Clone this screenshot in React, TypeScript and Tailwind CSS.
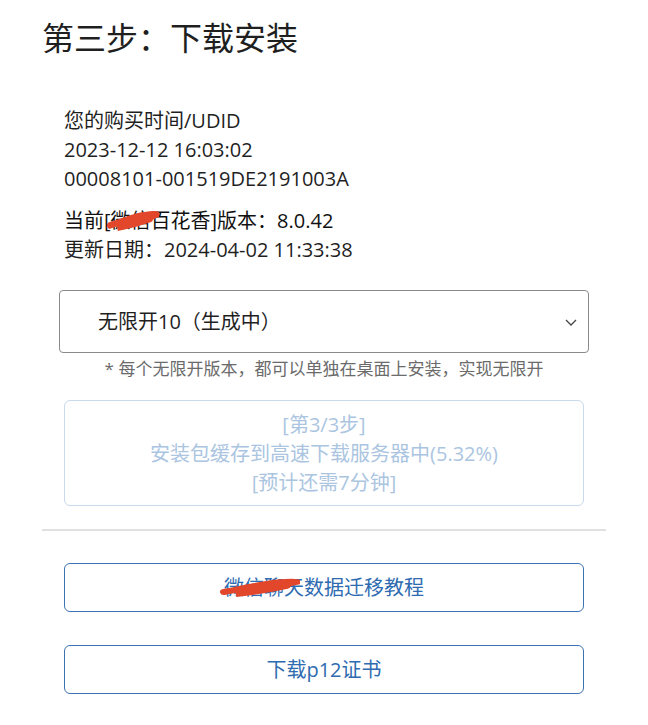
import React from "react";

function Scribble({ className }: { className: string }) {
  return (
    <svg className={className} viewBox="0 0 60 20" preserveAspectRatio="none">
      <path d="M3 15 C 15 12, 28 8, 40 6 C 48 5, 54 4, 57 5 C 45 9, 30 12, 12 17 C 25 15, 40 12, 50 9" stroke="#e2462b" strokeWidth="6" fill="none" strokeLinecap="round" />
    </svg>
  );
}

export default function App() {
  return (
    <div className="w-[648px] h-[725px] bg-white text-[#1f1f1f] overflow-hidden" style={{ fontFamily: '"Open Sans", "Noto Sans CJK SC", sans-serif' }}>
      <div className="pl-[42px] pt-[16px]">
        <h1 className="text-[32px] leading-[44px] font-normal">第三步：下载安装</h1>
      </div>
      <div className="pl-[64px] pt-[46px] text-[20px] leading-[29px]">
        <div>您的购买时间/UDID</div>
        <div>2023-12-12 16:03:02</div>
        <div>00008101-001519DE2191003A</div>
        <div className="mt-[13px] text-[#111]">
          <span>当前[</span><span className="relative">微信<Scribble className="absolute left-[-4px] top-[2px] w-[52px] h-[22px]" /></span>百花香]版本：<span className="font-medium">8.0.42</span>
        </div>
        <div>更新日期：2024-04-02 11:33:38</div>
      </div>
      <div className="mt-[26px] mx-[59px] h-[63px] border border-[#8a8a8a] rounded-[4px] flex items-center justify-between pl-[38px] pr-[10px]">
        <span className="text-[20px]">无限开10（生成中）</span>
        <svg width="14" height="10" viewBox="0 0 14 10"><path d="M2 3 L7 8 L12 3" stroke="#444" strokeWidth="1.3" fill="none" /></svg>
      </div>
      <div className="text-center text-[17px] leading-[22px] text-[#6b6b6b] mt-[5px]">* 每个无限开版本，都可以单独在桌面上安装，实现无限开</div>
      <div className="mt-[20px] mx-[64px] h-[106px] border border-[#c8d9ec] rounded-[6px] flex flex-col items-center justify-center text-[20px] leading-[29px] text-[#abc5e1]">
        <div>[第3/3步]</div>
        <div>安装包缓存到高速下载服务器中(5.32%)</div>
        <div>[预计还需7分钟]</div>
      </div>
      <div className="mt-[23px] mx-[42px] h-[2px] bg-[#e0e0e0]" />
      <div className="mx-[64px] mt-[32px] flex flex-col gap-[33px]">
        <div className="h-[49px] border border-[#3b73b3] rounded-[6px] flex items-center justify-center text-[20px] text-[#2e6bb0]">
          <span className="relative">微信聊天数据迁移教程<Scribble className="absolute left-[-4px] top-[4px] w-[80px] h-[20px]" /></span>
        </div>
        <div className="h-[49px] border border-[#3b73b3] rounded-[6px] flex items-center justify-center text-[20px] text-[#2e6bb0]">
          下载p12证书
        </div>
      </div>
    </div>
  );
}
